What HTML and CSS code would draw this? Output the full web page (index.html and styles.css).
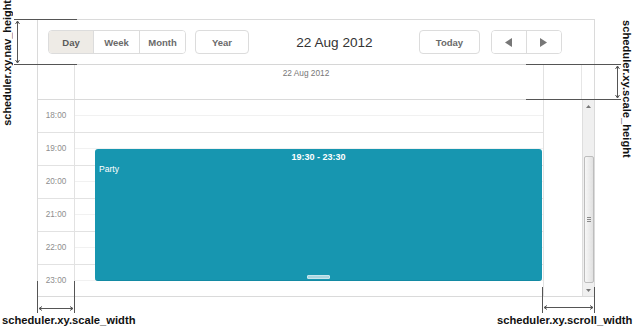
FILE: index.html
```html
<!DOCTYPE html>
<html>
<head>
<meta charset="utf-8">
<link rel="stylesheet" href="styles.css">
</head>
<body>
<div class="stage">
  <div class="scheduler">
    <div class="nav">
      <div class="seg tabs">
        <div class="btn tab active">Day</div>
        <div class="btn tab">Week</div>
        <div class="btn tab">Month</div>
      </div>
      <div class="btn single year">Year</div>
      <div class="title">22 Aug 2012</div>
      <div class="btn single today">Today</div>
      <div class="seg arrows">
        <div class="btn arrow prev"><svg width="8" height="9" viewBox="0 0 8 9"><polygon points="7,0 7,9 0,4.5" fill="#777"/></svg></div>
        <div class="btn arrow next"><svg width="8" height="9" viewBox="0 0 8 9"><polygon points="0,0 0,9 7,4.5" fill="#777"/></svg></div>
      </div>
    </div>
    <div class="scalehead">
      <div class="sh-scale"></div>
      <div class="sh-date">22 Aug 2012</div>
      <div class="sh-gap"></div>
      <div class="sh-scroll"></div>
    </div>
    <div class="body">
      <div class="grid">
        <div class="row"><div class="hour">18:00</div><div class="cell"></div></div>
        <div class="row"><div class="hour">19:00</div><div class="cell"></div></div>
        <div class="row"><div class="hour">20:00</div><div class="cell"></div></div>
        <div class="row"><div class="hour">21:00</div><div class="cell"></div></div>
        <div class="row"><div class="hour">22:00</div><div class="cell"></div></div>
        <div class="row"><div class="hour">23:00</div><div class="cell"></div></div>
        <div class="event">
          <div class="ev-time">19:30 - 23:30</div>
          <div class="ev-text">Party</div>
          <div class="ev-resize"></div>
        </div>
      </div>
      <div class="gap"></div>
      <div class="scrollbar">
        <div class="sb-up"><svg width="5" height="3" viewBox="0 0 5 3"><polygon points="0,3 5,3 2.5,0" fill="#777"/></svg></div>
        <div class="sb-thumb"><span></span><span></span><span></span></div>
        <div class="sb-down"><svg width="5" height="3" viewBox="0 0 5 3"><polygon points="0,0 5,0 2.5,3" fill="#777"/></svg></div>
      </div>
    </div>
  </div>

  <svg class="annot" width="634" height="327" viewBox="0 0 634 327">
    <g stroke="#555" stroke-width="1" fill="none">
      <line x1="14" y1="19.5" x2="77" y2="19.5"/>
      <line x1="14" y1="64.5" x2="77" y2="64.5"/>
      <line x1="17.5" y1="21" x2="17.5" y2="63"/>
      <polyline points="15.5,24 17.5,21 19.5,24"/>
      <polyline points="15.5,60 17.5,63 19.5,60"/>

      <line x1="526" y1="64.5" x2="621" y2="64.5"/>
      <line x1="526" y1="99.5" x2="621" y2="99.5"/>
      <line x1="617.5" y1="66" x2="617.5" y2="98"/>
      <polyline points="615.5,69 617.5,66 619.5,69"/>
      <polyline points="615.5,95 617.5,98 619.5,95"/>

      <line x1="37.5" y1="281" x2="37.5" y2="313"/>
      <line x1="74.5" y1="281" x2="74.5" y2="313"/>
      <line x1="39" y1="308.5" x2="73" y2="308.5"/>
      <polyline points="42,306.5 39,308.5 42,310.5"/>
      <polyline points="70,306.5 73,308.5 70,310.5"/>

      <line x1="542.5" y1="287" x2="542.5" y2="313"/>
      <line x1="594.5" y1="287" x2="594.5" y2="313"/>
      <line x1="544" y1="307.5" x2="593" y2="307.5"/>
      <polyline points="547,305.5 544,307.5 547,309.5"/>
      <polyline points="590,305.5 593,307.5 590,309.5"/>
    </g>
  </svg>
  <div class="label label-nav">scheduler.xy.nav_height</div>
  <div class="label label-scale-h">scheduler.xy.scale_height</div>
  <div class="label label-scale-w">scheduler.xy.scale_width</div>
  <div class="label label-scroll-w">scheduler.xy.scroll_width</div>
</div>
</body>
</html>
```

FILE: styles.css
```css
* { box-sizing: border-box; }

body {
  margin: 0;
  background: #fff;
  font-family: "Liberation Sans", Arial, sans-serif;
}

.stage {
  position: relative;
  width: 634px;
  height: 327px;
  padding: 19px 0 0 37px;
  overflow: hidden;
}

.scheduler {
  width: 558px;
  height: 278px;
  border: 1px solid #dadada;
  display: flex;
  flex-direction: column;
}

/* ---------- nav ---------- */
.nav {
  height: 45px;
  flex: none;
  border-bottom: 1px solid #d6d6d6;
  display: flex;
  align-items: center;
  padding: 0 32px 0 10px;
}

.seg {
  display: flex;
  height: 24px;
  border: 1px solid #dcdcdc;
  border-radius: 4px;
  overflow: hidden;
}

.btn {
  display: flex;
  align-items: center;
  justify-content: center;
  font-size: 9.5px;
  font-weight: bold;
  color: #6a6a6a;
  background: #fff;
}

.tab { border-right: 1px solid #dcdcdc; }
.tab:nth-child(1) { width: 45px; }
.tab:nth-child(2) { width: 46px; }
.tab:nth-child(3) { width: 45px; border-right: 0; }
.tab.active { background: #eeebe6; color: #5a5a5a; }

.single {
  height: 24px;
  border: 1px solid #dcdcdc;
  border-radius: 4px;
}

.year { width: 54px; margin-left: 9px; }
.today { width: 61px; margin-right: 11px; }

.title {
  flex: 1;
  text-align: center;
  font-size: 13.6px;
  color: #333;
  padding-left: 1px;
}

.arrows { width: 71px; }
.arrow.prev { width: 35px; border-right: 1px solid #dcdcdc; }
.arrow.next { width: 34px; }

/* ---------- scale header ---------- */
.scalehead {
  height: 35px;
  flex: none;
  border-bottom: 1px solid #dadada;
  display: flex;
}
.sh-scale { width: 37px; border-right: 1px solid #e2e2e2; }
.sh-date {
  width: 469px;
  border-right: 1px solid #e2e2e2;
  text-align: center;
  font-size: 8.3px;
  color: #777;
  padding-top: 3px;
  padding-right: 6px;
}
.sh-gap { width: 38px; border-right: 1px solid #e6e6e6; }
.sh-scroll { width: 12px; }

/* ---------- body ---------- */
.body {
  flex: 1;
  display: flex;
  overflow: hidden;
}

.grid {
  position: relative;
  width: 506px;
  flex: none;
}

.row {
  display: flex;
  height: 33px;
  border-bottom: 1px solid #e2e2e2;
}

.hour {
  width: 37px;
  border-right: 1px solid #e2e2e2;
  display: flex;
  align-items: center;
  justify-content: center;
  font-size: 8.2px;
  color: #8e8e8e;
  padding-bottom: 1px;
}

.cell {
  position: relative;
  width: 469px;
  border-right: 1px solid #e2e2e2;
}
.cell::after {
  content: "";
  position: absolute;
  left: 0;
  right: 0;
  top: 15px;
  height: 1px;
  background: #f1f1f1;
}

.event {
  position: absolute;
  top: 49px;
  left: 57px;
  width: 447px;
  height: 132px;
  background: #1796b0;
  border-radius: 3px;
  border-bottom: 1px solid #138aa3;
  color: #fff;
}
.ev-time {
  text-align: center;
  font-size: 9px;
  font-weight: bold;
  line-height: 11px;
  padding-top: 3px;
}
.ev-text {
  font-size: 8.6px;
  line-height: 11px;
  padding-left: 4px;
  padding-top: 1px;
}
.ev-resize {
  position: absolute;
  left: 212px;
  bottom: 1px;
  width: 23px;
  height: 4px;
  background: #a9d6e0;
  border: 1px solid #c7e6ed;
  border-radius: 1px;
}

.gap {
  width: 38px;
  flex: none;
}

.scrollbar {
  width: 12px;
  flex: none;
  border-left: 1px solid #dedede;
  background: #f0f0f0;
  display: flex;
  flex-direction: column;
  align-items: center;
}
.sb-up {
  height: 13px;
  display: flex;
  align-items: center;
  justify-content: center;
}
.sb-thumb {
  margin-top: 43px;
  width: 10px;
  height: 127px;
  border: 1px solid #bdbdbd;
  border-radius: 2px;
  background: linear-gradient(to right, #f7f7f7, #e1e1e1);
  display: flex;
  flex-direction: column;
  align-items: center;
  justify-content: center;
  gap: 1px;
}
.sb-thumb span {
  display: block;
  width: 4px;
  height: 1px;
  background: #8a8a8a;
}
.sb-down {
  margin-top: auto;
  height: 12px;
  display: flex;
  align-items: center;
  justify-content: center;
}

/* ---------- annotations ---------- */
.annot {
  position: absolute;
  left: 0;
  top: 0;
  pointer-events: none;
}

.label {
  position: absolute;
  font-family: "Liberation Sans", Arial, sans-serif;
  font-weight: bold;
  font-size: 11.2px;
  line-height: 14px;
  color: #111;
  white-space: nowrap;
}
.label-nav {
  left: 0;
  top: 0;
  font-size: 10.9px;
  writing-mode: vertical-rl;
  transform: rotate(180deg);
}
.label-scale-h {
  left: 620px;
  top: 20px;
  writing-mode: vertical-rl;
}
.label-scale-w {
  left: 2px;
  top: 313px;
}
.label-scroll-w {
  left: 497px;
  top: 313px;
}
```
